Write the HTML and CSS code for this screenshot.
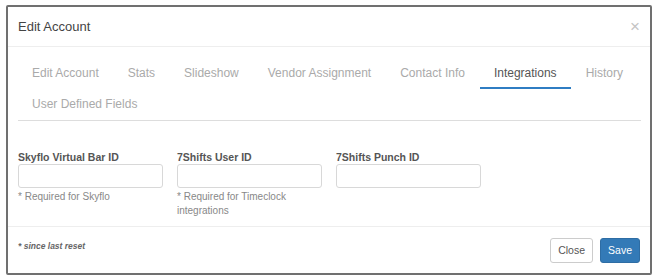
FILE: index.html
```html
<!DOCTYPE html>
<html lang="en">
<head>
  <meta charset="UTF-8" />
  <title>Edit Account</title>
  <link rel="stylesheet" href="styles.css">
</head>
<body>

  <div class="modal">
    <div class="modal-header">
      <span class="modal-title">Edit Account</span>
      <span class="close">&times;</span>
    </div>

    <div class="modal-body">
      <ul class="tabs">
        <li>Edit Account</li>
        <li>Stats</li>
        <li>Slideshow</li>
        <li>Vendor Assignment</li>
        <li>Contact Info</li>
        <li class="active">Integrations</li>
        <li>History</li>
        <li>User Defined Fields</li>
      </ul>

      <div class="fields">
        <div class="field">
          <label>Skyflo Virtual Bar ID</label>
          <input type="text" />
          <div class="help">* Required for Skyflo</div>
        </div>
        <div class="field">
          <label>7Shifts User ID</label>
          <input type="text" />
          <div class="help">* Required for Timeclock integrations</div>
        </div>
        <div class="field">
          <label>7Shifts Punch ID</label>
          <input type="text" />
        </div>
      </div>
    </div>

    <div class="modal-footer">
      <span class="note">* since last reset</span>
      <div class="buttons">
        <button class="btn">Close</button>
        <button class="btn btn-primary">Save</button>
      </div>
    </div>
  </div>

</body>
</html>
```

FILE: styles.css
```css
body {
  font-family: 'Liberation Sans', Arial, sans-serif;
  background: #fff;
  margin: 0;
  padding: 5px 0 0 6px;
  color: #555;
}

.modal {
  width: 642px;
  height: 266px;
  border: 2px solid #707070;
  border-radius: 2px;
  display: flex;
  flex-direction: column;
  box-sizing: content-box;
}

.modal-header {
  display: flex;
  justify-content: space-between;
  align-items: center;
  height: 39px;
  padding: 0 10px 0 10px;
  border-bottom: 1px solid #eee;
}

.modal-title {
  font-size: 13px;
  color: #444;
}

.close {
  font-size: 17px;
  color: #c4c4c4;
  line-height: 1;
}

.modal-body {
  padding: 11px 10px 0 10px;
  border-bottom: 1px solid #eee;
  flex: 1;
}

.tabs {
  list-style: none;
  margin: 0;
  padding: 0;
  display: flex;
  flex-wrap: wrap;
  border-bottom: 1px solid #ddd;
  width: 623px;
}

.tabs li {
  font-size: 12px;
  color: #aaa;
  padding: 0 14px;
  margin-right: 1px;
  height: 31px;
  line-height: 31px;
  box-sizing: border-box;
}

.tabs li.active {
  color: #555;
  border-bottom: 2px solid #2f7dc3;
}

.fields {
  display: flex;
  gap: 14px;
  padding-top: 30px;
}

.field {
  width: 145px;
}

.field label {
  display: block;
  font-size: 10.5px;
  font-weight: bold;
  color: #555;
  margin-bottom: 1px;
}

.field input {
  display: block;
  width: 145px;
  height: 24px;
  box-sizing: border-box;
  border: 1px solid #d8d8d8;
  border-radius: 3px;
  margin: 0;
}

.help {
  font-size: 10px;
  color: #888;
  line-height: 14px;
  margin-top: 2px;
}

.modal-footer {
  display: flex;
  justify-content: space-between;
  align-items: center;
  height: 46px;
  padding: 0 10px;
}

.note {
  font-size: 8.5px;
  font-style: italic;
  font-weight: bold;
  color: #666;
  margin-top: -8px;
}

.buttons {
  display: flex;
  gap: 7px;
}

.btn {
  font-family: 'Liberation Sans', Arial, sans-serif;
  font-size: 10.5px;
  height: 25px;
  padding: 0 7px;
  border: 1px solid #ccc;
  border-radius: 3px;
  background: #fff;
  color: #555;
}

.btn-primary {
  background: #337ab7;
  border-color: #2e6da4;
  color: #fff;
}
```
